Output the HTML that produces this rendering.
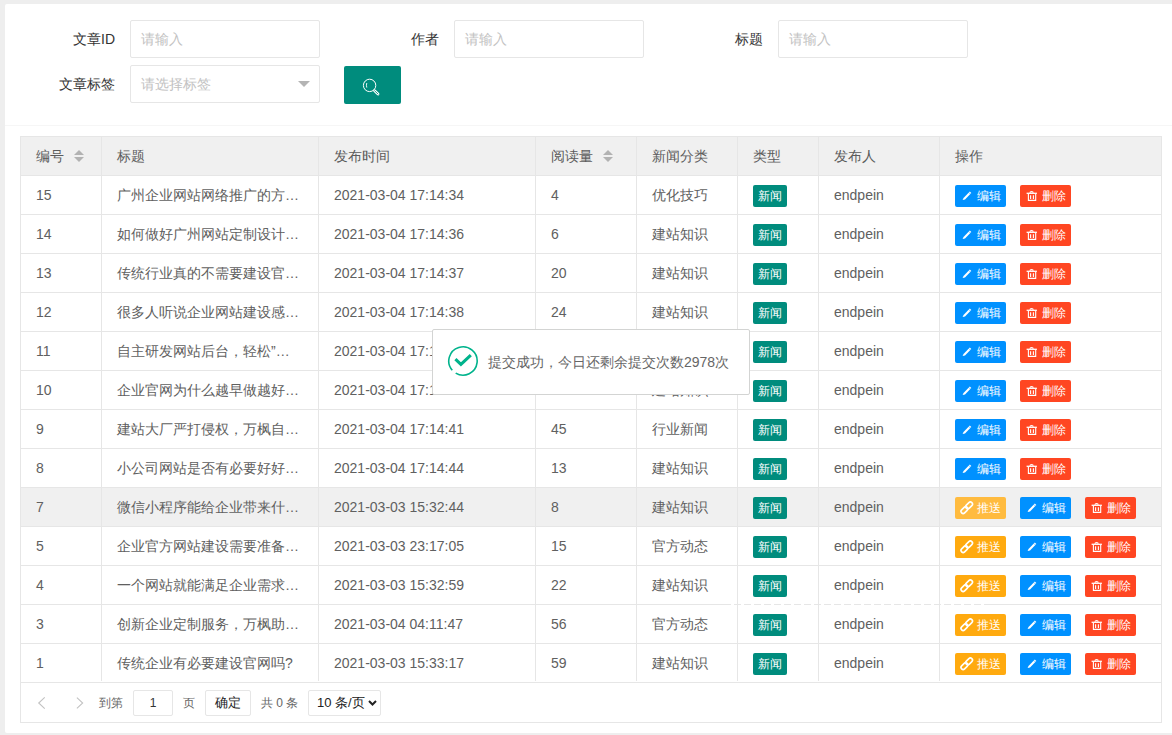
<!DOCTYPE html>
<html><head><meta charset="utf-8">
<style>
*{box-sizing:border-box}
html,body{margin:0;padding:0}
body{width:1172px;height:735px;overflow:hidden;background:#eeeeee;position:relative;font-family:"Liberation Sans",sans-serif;font-size:14px;color:#666}
.card{position:absolute;left:5px;top:4px;width:1175px;height:729px;background:#fff;border-radius:2px}
.sep{position:absolute;left:5px;top:125px;width:1167px;height:1px;background:#f6f6f6}
.lbl{position:absolute;height:38px;line-height:38px;text-align:right;color:#333;white-space:nowrap}
.inp{position:absolute;width:190px;height:38px;border:1px solid #e6e6e6;border-radius:2px;background:#fff;line-height:36px;padding-left:10px;color:#c2c2c2}
.sbtn{position:absolute;left:344px;top:66px;width:57px;height:38px;background:#008c7d;border-radius:2px}
.tri{position:absolute;left:298px;top:81px;width:0;height:0;border-left:6px solid transparent;border-right:6px solid transparent;border-top:6px solid #b4b4b4}
.tbl{position:absolute;left:20px;top:136px;width:1142px;height:587px;border:1px solid #e6e6e6}
.thead{position:absolute;left:21px;width:1140px;background:#f0f0f0}
.hover{position:absolute;left:21px;width:1140px;background:#f0f0f0}
.hl{position:absolute;left:20px;width:1142px;height:1px;background:#e6e6e6}
.vl{position:absolute;width:1px;background:#e6e6e6}
.cell{position:absolute;height:40px;line-height:40px;white-space:nowrap;color:#606060}
.th{color:#5c5c5c}
.sort{display:inline-block;position:relative;width:10px;height:20px;margin-left:10px;vertical-align:middle}
.sort b{position:absolute;left:0;width:0;height:0;border-left:5px solid transparent;border-right:5px solid transparent}
.sort .up{top:3px;border-bottom:5px solid #b2b2b2}
.sort .dn{top:10px;border-top:5px solid #b2b2b2}
.tag{position:absolute;width:34px;height:22px;line-height:22px;text-align:center;background:#008c7d;color:#fff;font-size:12px;border-radius:2px}
.btn{position:absolute;width:51px;height:22px;line-height:22px;color:#fff;font-size:12px;border-radius:2px;padding-left:6px;white-space:nowrap}
.btn svg{position:absolute;left:0;top:0}
.btn i{font-style:normal;position:absolute;left:22px;top:0}
.b-edit{background:#0091ff}
.b-del{background:#ff4622}
.b-push{background:#ffaa0f}
.b-push.hov{background:#ffbb3f}
.foot{position:absolute;left:21px;top:682px;width:1140px;height:40px}
.toast{position:absolute;left:432px;top:329px;width:318px;height:66px;background:#fff;border:1px solid #d3d4d3;border-radius:2px;box-shadow:1px 1px 50px rgba(0,0,0,.0)}
.toast .txt{position:absolute;left:55px;top:0;line-height:64px;color:#666;white-space:nowrap}
.toast svg{position:absolute;left:14px;top:15px}
.pg{position:absolute;font-size:12px;color:#666;white-space:nowrap}
.pbox{position:absolute;height:26px;border:1px solid #e6e6e6;border-radius:2px;background:#fff;font-size:12px;line-height:24px;text-align:center;color:#333}
</style></head><body>
<div class="card"></div>
<div class="sep"></div>
<div class="lbl" style="left:20px;top:20px;width:95px">文章ID</div>
<div class="inp" style="left:130px;top:20px">请输入</div>
<div class="lbl" style="left:344px;top:20px;width:95px">作者</div>
<div class="inp" style="left:454px;top:20px">请输入</div>
<div class="lbl" style="left:668px;top:20px;width:95px">标题</div>
<div class="inp" style="left:778px;top:20px">请输入</div>
<div class="lbl" style="left:20px;top:65px;width:95px">文章标签</div>
<div class="inp" style="left:130px;top:65px">请选择标签</div>
<div class="tri"></div>
<div class="sbtn"><svg width="57" height="38" viewBox="0 0 57 38" fill="none" stroke="#fff" stroke-width="1"><circle cx="25.6" cy="19.4" r="6.2"/><path d="M30.6 24.8 L34 28" stroke-width="2.8" stroke-linecap="round"/><path d="M30.6 24.8 L34 28" stroke="#008c7d" stroke-width="0.9" stroke-linecap="round"/><path d="M22.8 17 Q22 19.2 22.8 21.6" stroke-width="0.9"/></svg></div>
<div class="tbl"></div>
<div class="thead" style="top:137px;height:38px"></div>
<div class="cell th" style="left:36px;top:136px">编号<span class="sort"><b class="up"></b><b class="dn"></b></span></div>
<div class="cell th" style="left:117px;top:136px">标题</div>
<div class="cell th" style="left:334px;top:136px">发布时间</div>
<div class="cell th" style="left:551px;top:136px">阅读量<span class="sort"><b class="up"></b><b class="dn"></b></span></div>
<div class="cell th" style="left:652px;top:136px">新闻分类</div>
<div class="cell th" style="left:753px;top:136px">类型</div>
<div class="cell th" style="left:834px;top:136px">发布人</div>
<div class="cell th" style="left:955px;top:136px">操作</div>
<div class="cell" style="left:36px;top:175px">15</div>
<div class="cell" style="left:117px;top:175px">广州企业网站网络推广的方…</div>
<div class="cell" style="left:334px;top:175px">2021-03-04 17:14:34</div>
<div class="cell" style="left:551px;top:175px">4</div>
<div class="cell" style="left:652px;top:175px">优化技巧</div>
<span class="tag" style="left:753px;top:185px">新闻</span>
<div class="cell" style="left:834px;top:175px">endpein</div>
<span class="btn b-edit" style="top:185px;left:955px"><svg width="22" height="22" viewBox="0 0 22 22"><path d="M7.6 15.1 L8.5 12.9 L14.8 6.6 L16.3 8.1 L10 14.4 Z" fill="#fff"/><path d="M13.9 7.5 L15.4 9" stroke="#0091ff" stroke-width="0.5"/></svg><i>编辑</i></span>
<span class="btn b-del" style="top:185px;left:1020px"><svg width="22" height="22" viewBox="0 0 22 22" fill="none" stroke="#fff"><path d="M6.6 8.3 H16.9" stroke-width="1.3"/><path d="M10 7.8 Q10 6.6 11.6 6.6 Q13.2 6.6 13.2 7.8" stroke-width="1.2"/><path d="M8.4 9 V15.4 H15.7 V9" stroke-width="1.1"/><path d="M10.6 10.2 V14 M13.4 10.2 V14" stroke-width="1.1"/></svg><i>删除</i></span>
<div class="cell" style="left:36px;top:214px">14</div>
<div class="cell" style="left:117px;top:214px">如何做好广州网站定制设计…</div>
<div class="cell" style="left:334px;top:214px">2021-03-04 17:14:36</div>
<div class="cell" style="left:551px;top:214px">6</div>
<div class="cell" style="left:652px;top:214px">建站知识</div>
<span class="tag" style="left:753px;top:224px">新闻</span>
<div class="cell" style="left:834px;top:214px">endpein</div>
<span class="btn b-edit" style="top:224px;left:955px"><svg width="22" height="22" viewBox="0 0 22 22"><path d="M7.6 15.1 L8.5 12.9 L14.8 6.6 L16.3 8.1 L10 14.4 Z" fill="#fff"/><path d="M13.9 7.5 L15.4 9" stroke="#0091ff" stroke-width="0.5"/></svg><i>编辑</i></span>
<span class="btn b-del" style="top:224px;left:1020px"><svg width="22" height="22" viewBox="0 0 22 22" fill="none" stroke="#fff"><path d="M6.6 8.3 H16.9" stroke-width="1.3"/><path d="M10 7.8 Q10 6.6 11.6 6.6 Q13.2 6.6 13.2 7.8" stroke-width="1.2"/><path d="M8.4 9 V15.4 H15.7 V9" stroke-width="1.1"/><path d="M10.6 10.2 V14 M13.4 10.2 V14" stroke-width="1.1"/></svg><i>删除</i></span>
<div class="cell" style="left:36px;top:253px">13</div>
<div class="cell" style="left:117px;top:253px">传统行业真的不需要建设官…</div>
<div class="cell" style="left:334px;top:253px">2021-03-04 17:14:37</div>
<div class="cell" style="left:551px;top:253px">20</div>
<div class="cell" style="left:652px;top:253px">建站知识</div>
<span class="tag" style="left:753px;top:263px">新闻</span>
<div class="cell" style="left:834px;top:253px">endpein</div>
<span class="btn b-edit" style="top:263px;left:955px"><svg width="22" height="22" viewBox="0 0 22 22"><path d="M7.6 15.1 L8.5 12.9 L14.8 6.6 L16.3 8.1 L10 14.4 Z" fill="#fff"/><path d="M13.9 7.5 L15.4 9" stroke="#0091ff" stroke-width="0.5"/></svg><i>编辑</i></span>
<span class="btn b-del" style="top:263px;left:1020px"><svg width="22" height="22" viewBox="0 0 22 22" fill="none" stroke="#fff"><path d="M6.6 8.3 H16.9" stroke-width="1.3"/><path d="M10 7.8 Q10 6.6 11.6 6.6 Q13.2 6.6 13.2 7.8" stroke-width="1.2"/><path d="M8.4 9 V15.4 H15.7 V9" stroke-width="1.1"/><path d="M10.6 10.2 V14 M13.4 10.2 V14" stroke-width="1.1"/></svg><i>删除</i></span>
<div class="cell" style="left:36px;top:292px">12</div>
<div class="cell" style="left:117px;top:292px">很多人听说企业网站建设感…</div>
<div class="cell" style="left:334px;top:292px">2021-03-04 17:14:38</div>
<div class="cell" style="left:551px;top:292px">24</div>
<div class="cell" style="left:652px;top:292px">建站知识</div>
<span class="tag" style="left:753px;top:302px">新闻</span>
<div class="cell" style="left:834px;top:292px">endpein</div>
<span class="btn b-edit" style="top:302px;left:955px"><svg width="22" height="22" viewBox="0 0 22 22"><path d="M7.6 15.1 L8.5 12.9 L14.8 6.6 L16.3 8.1 L10 14.4 Z" fill="#fff"/><path d="M13.9 7.5 L15.4 9" stroke="#0091ff" stroke-width="0.5"/></svg><i>编辑</i></span>
<span class="btn b-del" style="top:302px;left:1020px"><svg width="22" height="22" viewBox="0 0 22 22" fill="none" stroke="#fff"><path d="M6.6 8.3 H16.9" stroke-width="1.3"/><path d="M10 7.8 Q10 6.6 11.6 6.6 Q13.2 6.6 13.2 7.8" stroke-width="1.2"/><path d="M8.4 9 V15.4 H15.7 V9" stroke-width="1.1"/><path d="M10.6 10.2 V14 M13.4 10.2 V14" stroke-width="1.1"/></svg><i>删除</i></span>
<div class="cell" style="left:36px;top:331px">11</div>
<div class="cell" style="left:117px;top:331px">自主研发网站后台，轻松”…</div>
<div class="cell" style="left:334px;top:331px">2021-03-04 17:14:39</div>
<div class="cell" style="left:551px;top:331px">32</div>
<div class="cell" style="left:652px;top:331px">建站知识</div>
<span class="tag" style="left:753px;top:341px">新闻</span>
<div class="cell" style="left:834px;top:331px">endpein</div>
<span class="btn b-edit" style="top:341px;left:955px"><svg width="22" height="22" viewBox="0 0 22 22"><path d="M7.6 15.1 L8.5 12.9 L14.8 6.6 L16.3 8.1 L10 14.4 Z" fill="#fff"/><path d="M13.9 7.5 L15.4 9" stroke="#0091ff" stroke-width="0.5"/></svg><i>编辑</i></span>
<span class="btn b-del" style="top:341px;left:1020px"><svg width="22" height="22" viewBox="0 0 22 22" fill="none" stroke="#fff"><path d="M6.6 8.3 H16.9" stroke-width="1.3"/><path d="M10 7.8 Q10 6.6 11.6 6.6 Q13.2 6.6 13.2 7.8" stroke-width="1.2"/><path d="M8.4 9 V15.4 H15.7 V9" stroke-width="1.1"/><path d="M10.6 10.2 V14 M13.4 10.2 V14" stroke-width="1.1"/></svg><i>删除</i></span>
<div class="cell" style="left:36px;top:370px">10</div>
<div class="cell" style="left:117px;top:370px">企业官网为什么越早做越好…</div>
<div class="cell" style="left:334px;top:370px">2021-03-04 17:14:40</div>
<div class="cell" style="left:551px;top:370px">37</div>
<div class="cell" style="left:652px;top:370px">建站知识</div>
<span class="tag" style="left:753px;top:380px">新闻</span>
<div class="cell" style="left:834px;top:370px">endpein</div>
<span class="btn b-edit" style="top:380px;left:955px"><svg width="22" height="22" viewBox="0 0 22 22"><path d="M7.6 15.1 L8.5 12.9 L14.8 6.6 L16.3 8.1 L10 14.4 Z" fill="#fff"/><path d="M13.9 7.5 L15.4 9" stroke="#0091ff" stroke-width="0.5"/></svg><i>编辑</i></span>
<span class="btn b-del" style="top:380px;left:1020px"><svg width="22" height="22" viewBox="0 0 22 22" fill="none" stroke="#fff"><path d="M6.6 8.3 H16.9" stroke-width="1.3"/><path d="M10 7.8 Q10 6.6 11.6 6.6 Q13.2 6.6 13.2 7.8" stroke-width="1.2"/><path d="M8.4 9 V15.4 H15.7 V9" stroke-width="1.1"/><path d="M10.6 10.2 V14 M13.4 10.2 V14" stroke-width="1.1"/></svg><i>删除</i></span>
<div class="cell" style="left:36px;top:409px">9</div>
<div class="cell" style="left:117px;top:409px">建站大厂严打侵权，万枫自…</div>
<div class="cell" style="left:334px;top:409px">2021-03-04 17:14:41</div>
<div class="cell" style="left:551px;top:409px">45</div>
<div class="cell" style="left:652px;top:409px">行业新闻</div>
<span class="tag" style="left:753px;top:419px">新闻</span>
<div class="cell" style="left:834px;top:409px">endpein</div>
<span class="btn b-edit" style="top:419px;left:955px"><svg width="22" height="22" viewBox="0 0 22 22"><path d="M7.6 15.1 L8.5 12.9 L14.8 6.6 L16.3 8.1 L10 14.4 Z" fill="#fff"/><path d="M13.9 7.5 L15.4 9" stroke="#0091ff" stroke-width="0.5"/></svg><i>编辑</i></span>
<span class="btn b-del" style="top:419px;left:1020px"><svg width="22" height="22" viewBox="0 0 22 22" fill="none" stroke="#fff"><path d="M6.6 8.3 H16.9" stroke-width="1.3"/><path d="M10 7.8 Q10 6.6 11.6 6.6 Q13.2 6.6 13.2 7.8" stroke-width="1.2"/><path d="M8.4 9 V15.4 H15.7 V9" stroke-width="1.1"/><path d="M10.6 10.2 V14 M13.4 10.2 V14" stroke-width="1.1"/></svg><i>删除</i></span>
<div class="cell" style="left:36px;top:448px">8</div>
<div class="cell" style="left:117px;top:448px">小公司网站是否有必要好好…</div>
<div class="cell" style="left:334px;top:448px">2021-03-04 17:14:44</div>
<div class="cell" style="left:551px;top:448px">13</div>
<div class="cell" style="left:652px;top:448px">建站知识</div>
<span class="tag" style="left:753px;top:458px">新闻</span>
<div class="cell" style="left:834px;top:448px">endpein</div>
<span class="btn b-edit" style="top:458px;left:955px"><svg width="22" height="22" viewBox="0 0 22 22"><path d="M7.6 15.1 L8.5 12.9 L14.8 6.6 L16.3 8.1 L10 14.4 Z" fill="#fff"/><path d="M13.9 7.5 L15.4 9" stroke="#0091ff" stroke-width="0.5"/></svg><i>编辑</i></span>
<span class="btn b-del" style="top:458px;left:1020px"><svg width="22" height="22" viewBox="0 0 22 22" fill="none" stroke="#fff"><path d="M6.6 8.3 H16.9" stroke-width="1.3"/><path d="M10 7.8 Q10 6.6 11.6 6.6 Q13.2 6.6 13.2 7.8" stroke-width="1.2"/><path d="M8.4 9 V15.4 H15.7 V9" stroke-width="1.1"/><path d="M10.6 10.2 V14 M13.4 10.2 V14" stroke-width="1.1"/></svg><i>删除</i></span>
<div class="hover" style="top:488px;height:38px"></div>
<div class="cell" style="left:36px;top:487px">7</div>
<div class="cell" style="left:117px;top:487px">微信小程序能给企业带来什…</div>
<div class="cell" style="left:334px;top:487px">2021-03-03 15:32:44</div>
<div class="cell" style="left:551px;top:487px">8</div>
<div class="cell" style="left:652px;top:487px">建站知识</div>
<span class="tag" style="left:753px;top:497px">新闻</span>
<div class="cell" style="left:834px;top:487px">endpein</div>
<span class="btn b-push hov" style="top:497px;left:955px"><svg width="22" height="22" viewBox="0 0 22 22" fill="none" stroke="#fff" stroke-width="1.6"><rect x="5.5" y="11" width="7.8" height="4.2" rx="2.1" transform="rotate(-45 9.4 13.1)"/><rect x="10.2" y="6.3" width="7.8" height="4.2" rx="2.1" transform="rotate(-45 14.1 8.4)"/></svg><i>推送</i></span>
<span class="btn b-edit" style="top:497px;left:1020px"><svg width="22" height="22" viewBox="0 0 22 22"><path d="M7.6 15.1 L8.5 12.9 L14.8 6.6 L16.3 8.1 L10 14.4 Z" fill="#fff"/><path d="M13.9 7.5 L15.4 9" stroke="#0091ff" stroke-width="0.5"/></svg><i>编辑</i></span>
<span class="btn b-del" style="top:497px;left:1085px"><svg width="22" height="22" viewBox="0 0 22 22" fill="none" stroke="#fff"><path d="M6.6 8.3 H16.9" stroke-width="1.3"/><path d="M10 7.8 Q10 6.6 11.6 6.6 Q13.2 6.6 13.2 7.8" stroke-width="1.2"/><path d="M8.4 9 V15.4 H15.7 V9" stroke-width="1.1"/><path d="M10.6 10.2 V14 M13.4 10.2 V14" stroke-width="1.1"/></svg><i>删除</i></span>
<div class="cell" style="left:36px;top:526px">5</div>
<div class="cell" style="left:117px;top:526px">企业官方网站建设需要准备…</div>
<div class="cell" style="left:334px;top:526px">2021-03-03 23:17:05</div>
<div class="cell" style="left:551px;top:526px">15</div>
<div class="cell" style="left:652px;top:526px">官方动态</div>
<span class="tag" style="left:753px;top:536px">新闻</span>
<div class="cell" style="left:834px;top:526px">endpein</div>
<span class="btn b-push" style="top:536px;left:955px"><svg width="22" height="22" viewBox="0 0 22 22" fill="none" stroke="#fff" stroke-width="1.6"><rect x="5.5" y="11" width="7.8" height="4.2" rx="2.1" transform="rotate(-45 9.4 13.1)"/><rect x="10.2" y="6.3" width="7.8" height="4.2" rx="2.1" transform="rotate(-45 14.1 8.4)"/></svg><i>推送</i></span>
<span class="btn b-edit" style="top:536px;left:1020px"><svg width="22" height="22" viewBox="0 0 22 22"><path d="M7.6 15.1 L8.5 12.9 L14.8 6.6 L16.3 8.1 L10 14.4 Z" fill="#fff"/><path d="M13.9 7.5 L15.4 9" stroke="#0091ff" stroke-width="0.5"/></svg><i>编辑</i></span>
<span class="btn b-del" style="top:536px;left:1085px"><svg width="22" height="22" viewBox="0 0 22 22" fill="none" stroke="#fff"><path d="M6.6 8.3 H16.9" stroke-width="1.3"/><path d="M10 7.8 Q10 6.6 11.6 6.6 Q13.2 6.6 13.2 7.8" stroke-width="1.2"/><path d="M8.4 9 V15.4 H15.7 V9" stroke-width="1.1"/><path d="M10.6 10.2 V14 M13.4 10.2 V14" stroke-width="1.1"/></svg><i>删除</i></span>
<div class="cell" style="left:36px;top:565px">4</div>
<div class="cell" style="left:117px;top:565px">一个网站就能满足企业需求…</div>
<div class="cell" style="left:334px;top:565px">2021-03-03 15:32:59</div>
<div class="cell" style="left:551px;top:565px">22</div>
<div class="cell" style="left:652px;top:565px">建站知识</div>
<span class="tag" style="left:753px;top:575px">新闻</span>
<div class="cell" style="left:834px;top:565px">endpein</div>
<span class="btn b-push" style="top:575px;left:955px"><svg width="22" height="22" viewBox="0 0 22 22" fill="none" stroke="#fff" stroke-width="1.6"><rect x="5.5" y="11" width="7.8" height="4.2" rx="2.1" transform="rotate(-45 9.4 13.1)"/><rect x="10.2" y="6.3" width="7.8" height="4.2" rx="2.1" transform="rotate(-45 14.1 8.4)"/></svg><i>推送</i></span>
<span class="btn b-edit" style="top:575px;left:1020px"><svg width="22" height="22" viewBox="0 0 22 22"><path d="M7.6 15.1 L8.5 12.9 L14.8 6.6 L16.3 8.1 L10 14.4 Z" fill="#fff"/><path d="M13.9 7.5 L15.4 9" stroke="#0091ff" stroke-width="0.5"/></svg><i>编辑</i></span>
<span class="btn b-del" style="top:575px;left:1085px"><svg width="22" height="22" viewBox="0 0 22 22" fill="none" stroke="#fff"><path d="M6.6 8.3 H16.9" stroke-width="1.3"/><path d="M10 7.8 Q10 6.6 11.6 6.6 Q13.2 6.6 13.2 7.8" stroke-width="1.2"/><path d="M8.4 9 V15.4 H15.7 V9" stroke-width="1.1"/><path d="M10.6 10.2 V14 M13.4 10.2 V14" stroke-width="1.1"/></svg><i>删除</i></span>
<div class="cell" style="left:36px;top:604px">3</div>
<div class="cell" style="left:117px;top:604px">创新企业定制服务，万枫助…</div>
<div class="cell" style="left:334px;top:604px">2021-03-04 04:11:47</div>
<div class="cell" style="left:551px;top:604px">56</div>
<div class="cell" style="left:652px;top:604px">官方动态</div>
<span class="tag" style="left:753px;top:614px">新闻</span>
<div class="cell" style="left:834px;top:604px">endpein</div>
<span class="btn b-push" style="top:614px;left:955px"><svg width="22" height="22" viewBox="0 0 22 22" fill="none" stroke="#fff" stroke-width="1.6"><rect x="5.5" y="11" width="7.8" height="4.2" rx="2.1" transform="rotate(-45 9.4 13.1)"/><rect x="10.2" y="6.3" width="7.8" height="4.2" rx="2.1" transform="rotate(-45 14.1 8.4)"/></svg><i>推送</i></span>
<span class="btn b-edit" style="top:614px;left:1020px"><svg width="22" height="22" viewBox="0 0 22 22"><path d="M7.6 15.1 L8.5 12.9 L14.8 6.6 L16.3 8.1 L10 14.4 Z" fill="#fff"/><path d="M13.9 7.5 L15.4 9" stroke="#0091ff" stroke-width="0.5"/></svg><i>编辑</i></span>
<span class="btn b-del" style="top:614px;left:1085px"><svg width="22" height="22" viewBox="0 0 22 22" fill="none" stroke="#fff"><path d="M6.6 8.3 H16.9" stroke-width="1.3"/><path d="M10 7.8 Q10 6.6 11.6 6.6 Q13.2 6.6 13.2 7.8" stroke-width="1.2"/><path d="M8.4 9 V15.4 H15.7 V9" stroke-width="1.1"/><path d="M10.6 10.2 V14 M13.4 10.2 V14" stroke-width="1.1"/></svg><i>删除</i></span>
<div class="cell" style="left:36px;top:643px">1</div>
<div class="cell" style="left:117px;top:643px">传统企业有必要建设官网吗?</div>
<div class="cell" style="left:334px;top:643px">2021-03-03 15:33:17</div>
<div class="cell" style="left:551px;top:643px">59</div>
<div class="cell" style="left:652px;top:643px">建站知识</div>
<span class="tag" style="left:753px;top:653px">新闻</span>
<div class="cell" style="left:834px;top:643px">endpein</div>
<span class="btn b-push" style="top:653px;left:955px"><svg width="22" height="22" viewBox="0 0 22 22" fill="none" stroke="#fff" stroke-width="1.6"><rect x="5.5" y="11" width="7.8" height="4.2" rx="2.1" transform="rotate(-45 9.4 13.1)"/><rect x="10.2" y="6.3" width="7.8" height="4.2" rx="2.1" transform="rotate(-45 14.1 8.4)"/></svg><i>推送</i></span>
<span class="btn b-edit" style="top:653px;left:1020px"><svg width="22" height="22" viewBox="0 0 22 22"><path d="M7.6 15.1 L8.5 12.9 L14.8 6.6 L16.3 8.1 L10 14.4 Z" fill="#fff"/><path d="M13.9 7.5 L15.4 9" stroke="#0091ff" stroke-width="0.5"/></svg><i>编辑</i></span>
<span class="btn b-del" style="top:653px;left:1085px"><svg width="22" height="22" viewBox="0 0 22 22" fill="none" stroke="#fff"><path d="M6.6 8.3 H16.9" stroke-width="1.3"/><path d="M10 7.8 Q10 6.6 11.6 6.6 Q13.2 6.6 13.2 7.8" stroke-width="1.2"/><path d="M8.4 9 V15.4 H15.7 V9" stroke-width="1.1"/><path d="M10.6 10.2 V14 M13.4 10.2 V14" stroke-width="1.1"/></svg><i>删除</i></span>
<div class="hl" style="top:136px"></div>
<div class="hl" style="top:175px"></div>
<div class="hl" style="top:214px"></div>
<div class="hl" style="top:253px"></div>
<div class="hl" style="top:292px"></div>
<div class="hl" style="top:331px"></div>
<div class="hl" style="top:370px"></div>
<div class="hl" style="top:409px"></div>
<div class="hl" style="top:448px"></div>
<div class="hl" style="top:487px"></div>
<div class="hl" style="top:526px"></div>
<div class="hl" style="top:565px"></div>
<div class="hl" style="top:604px"></div>
<div class="hl" style="top:643px"></div>
<div class="hl" style="top:682px"></div>
<div class="vl" style="left:101px;top:136px;height:545px"></div>
<div class="vl" style="left:318px;top:136px;height:545px"></div>
<div class="vl" style="left:535px;top:136px;height:545px"></div>
<div class="vl" style="left:636px;top:136px;height:545px"></div>
<div class="vl" style="left:737px;top:136px;height:545px"></div>
<div class="vl" style="left:818px;top:136px;height:545px"></div>
<div class="vl" style="left:939px;top:136px;height:545px"></div>
<div style="position:absolute;left:724px;top:604px;width:266px;height:1px;background:repeating-linear-gradient(90deg,transparent 0 7px,#fff 7px 10px)"></div>
<div class="toast"><svg width="32" height="32" viewBox="0 0 32 32" fill="none" stroke="#00b38c"><path d="M5.28 25.32 A14.2 14.2 0 1 1 8.69 28.17" stroke-width="1.6"/><path d="M8.4 14.2 L13.9 19.3 L23.8 10.2" stroke-width="3.1"/></svg><div class="txt">提交成功，今日还剩余提交次数2978次</div></div>
<svg style="position:absolute;left:37px;top:697px" width="9" height="12" viewBox="0 0 9 13" fill="none" stroke="#c2c2c2" stroke-width="1.2"><path d="M8 0.5 L1.5 6.5 L8 12.5"/></svg>
<svg style="position:absolute;left:76px;top:697px" width="8" height="12" viewBox="0 0 9 13" fill="none" stroke="#c2c2c2" stroke-width="1.2"><path d="M1 0.5 L7.5 6.5 L1 12.5"/></svg>
<div class="pg" style="left:99px;top:694px;line-height:18px">到第</div>
<div class="pbox" style="left:133px;top:690px;width:40px">1</div>
<div class="pg" style="left:183px;top:694px;line-height:18px">页</div>
<div class="pbox" style="left:205px;top:690px;width:46px;color:#222;font-size:13px">确定</div>
<div class="pg" style="left:261px;top:694px;line-height:18px">共 0 条</div>
<div class="pbox" style="left:308px;top:690px;width:73px;text-align:left;padding-left:8px;color:#222;font-size:13px">10 条/页<svg style="position:absolute;left:59px;top:8px" width="9" height="8" viewBox="0 0 9 8" fill="none" stroke="#222" stroke-width="2"><path d="M1 2 L4.5 5.5 L8 2"/></svg></div>
</body></html>
